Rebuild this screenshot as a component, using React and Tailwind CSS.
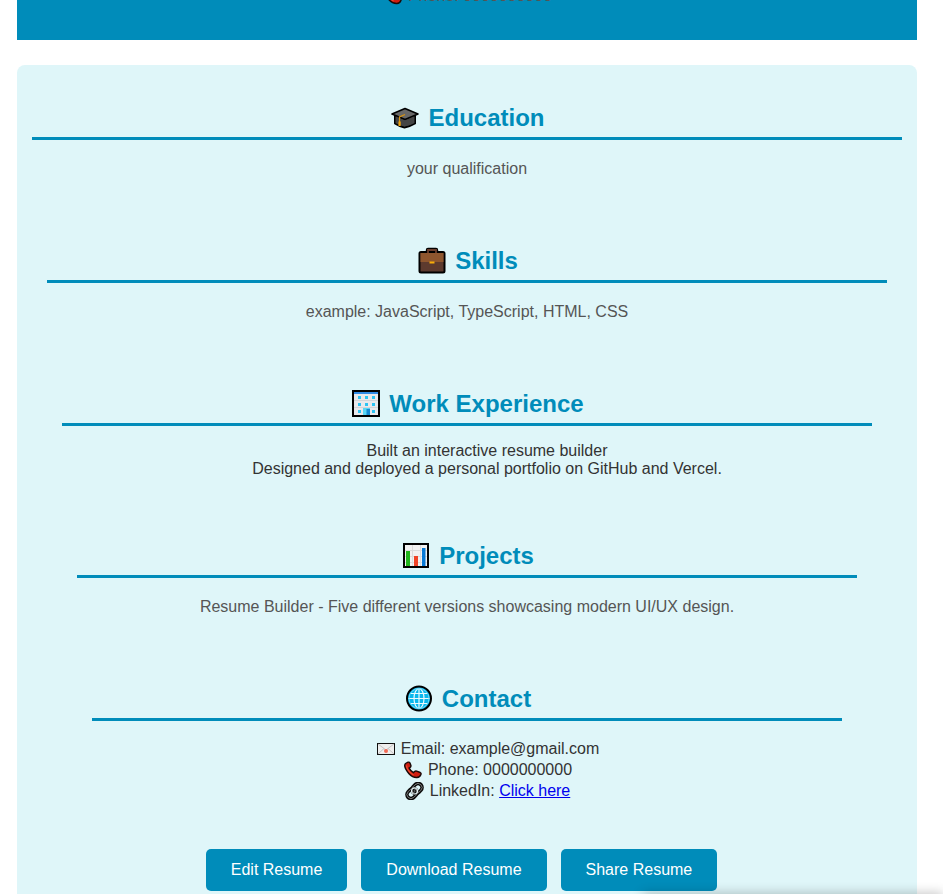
import React from "react";

const EMOJI = "inline-block shrink-0";

function GraduationCap() {
  return (
    <svg className={EMOJI} width="33" height="28" viewBox="0 0 33 28" aria-hidden="true">
      <path d="M6 10v9.500q4.500 3 9.500 4 5.500-1 10.500-4V10z" fill="#444" stroke="#000" strokeWidth="2" strokeLinejoin="round" />
      <path d="M3 10 16 4.500 29 10l-13 5.500z" fill="#686868" stroke="#000" strokeWidth="1.600" strokeLinejoin="round" />
      <path d="M6.500 12.500v6.500q4 2.500 9 3.500 5.500-1 10-3.500v-6.500L16 16.500z" fill="#444" />
      <path d="M16 10.500 10.500 13v8" fill="none" stroke="#d99411" strokeWidth="1.200" />
      <path d="M9.500 17.500h2.200V22H9.500z" fill="#f0a30a" />
    </svg>
  );
}

function Briefcase() {
  return (
    <svg className={EMOJI} width="33" height="28" viewBox="0 0 33 28" aria-hidden="true">
      <path d="M12 6V3h8v3" fill="none" stroke="#000" strokeWidth="4.400" strokeLinejoin="round" />
      <rect x="3.500" y="5" width="25" height="20.500" rx="1.500" fill="#5d3a2e" stroke="#000" strokeWidth="2" />
      <path d="M4.500 6h23v9h-23z" fill="#8e562e" />
      <path d="M12 6V3h8v3" fill="none" stroke="#6b3d2c" strokeWidth="1.800" />
      <path d="M13.500 14.500h5v2h-5z" fill="#f9ae08" />
    </svg>
  );
}

function Office() {
  return (
    <svg className={EMOJI} width="33" height="28" viewBox="0 0 33 28" aria-hidden="true">
      <rect x="3" y="1" width="26" height="25" fill="#e8e9ec" stroke="#000" strokeWidth="2" />
      <path d="M4 2h24v2H4z" fill="#2f8be6" />
      <path d="M4 10.500h24M4 17.500h24" stroke="#d3d5d9" />
      <path d="M8 6h3v3H8zM15 6h3v3h-3zM22 6h3v3h-3zM8 13h3v3H8zM15 13h3v3h-3zM22 13h3v3h-3zM8 20h3v3H8zM22 20h3v3h-3z" fill="#2cc3f3" />
      <path d="M13 18h7v7h-7z" fill="#58d6f5" />
      <path d="M16.500 19H20v6h-3.500z" fill="#168bd2" />
    </svg>
  );
}

function BarChart() {
  return (
    <svg className={EMOJI} width="33" height="28" viewBox="0 0 33 28" aria-hidden="true">
      <rect x="4" y="2" width="24" height="23" fill="#f2f2f2" stroke="#000" strokeWidth="2" />
      <path d="M5 8.500h22M5 14.500h22M5 20.500h22M12.500 3v21M20.500 3v21" stroke="#dcdcdc" />
      <path d="M6 9h4v15H6z" fill="#20b51d" />
      <path d="M14 14h4v10h-4z" fill="#f04428" />
      <path d="M22 6h3.500v18H22z" fill="#0879d5" />
    </svg>
  );
}

function Globe() {
  return (
    <svg className={EMOJI} width="33" height="28" viewBox="0 0 33 28" aria-hidden="true">
      <circle cx="16" cy="13.500" r="12" fill="#09b7ed" stroke="#000" strokeWidth="2" />
      <g fill="none" stroke="#e9faff" strokeWidth="1.200">
        <ellipse cx="16" cy="13.500" rx="5" ry="10" />
        <path d="M16 3v21M5.500 13.500h21M7 8.500h18M7 18.500h18" />
      </g>
      <circle cx="16" cy="13.500" r="10" fill="none" stroke="#6fd8f6" />
    </svg>
  );
}

function Envelope() {
  return (
    <svg className={EMOJI} width="22" height="18" viewBox="0 0 22 18" aria-hidden="true">
      <rect x="2.500" y="3.500" width="17" height="11" fill="#eeeeee" stroke="#111" />
      <path d="m3 4 8 6 8-6M3 14l6-5.500M19 14l-6-5.500" fill="none" stroke="#c4c4c4" />
      <circle cx="11" cy="11" r="2" fill="#f06a56" />
    </svg>
  );
}

function Phone() {
  return (
    <svg className={EMOJI} width="22" height="18" viewBox="0 0 22 18" aria-hidden="true">
      <path
        d="M3.500 2.500 6 1.200q1.400-.4 2 .9l.9 2.400q.3 1.300-1 2.100l-.7.500q1.300 3 4.300 4.500l1-1q1-.9 2.200-.5l3.500 1.400q1.300.7.700 2-1 2.800-3.900 3-4.300.3-8-3.800Q3.200 8.500 2.700 5q-.1-1.600.8-2.500z"
        fill="#cf1d10"
        stroke="#1a0a08"
        strokeWidth="1.400"
      />
      <path d="M4.500 4.500q.5 5.500 7 9.500" fill="none" stroke="#f04a30" strokeWidth="1.200" />
    </svg>
  );
}

function Link() {
  return (
    <svg className={EMOJI} width="22" height="18" viewBox="0 0 22 18" aria-hidden="true">
      <g transform="rotate(-45 10.500 9)" fill="none">
        <rect x="1.500" y="5" width="11" height="8" rx="4" stroke="#0c0c0c" strokeWidth="3.600" />
        <rect x="8.500" y="5" width="11" height="8" rx="4" stroke="#0c0c0c" strokeWidth="3.600" />
        <rect x="1.500" y="5" width="11" height="8" rx="4" stroke="#8f8f8f" strokeWidth="0.800" />
        <rect x="8.500" y="5" width="11" height="8" rx="4" stroke="#8f8f8f" strokeWidth="0.800" />
        <rect x="7.500" y="6" width="6" height="6" rx="3" stroke="#e4f3f5" strokeWidth="1.200" />
      </g>
    </svg>
  );
}

function Heading({ icon, children }) {
  return (
    <h2 className="flex items-center justify-center gap-[6px] border-b-3 border-[#008cba] pb-[5px] text-2xl leading-7 font-bold text-[#008cba]">
      {icon}
      {children}
    </h2>
  );
}

function Note({ children }) {
  return <p className="mt-5 mb-[69px] text-base leading-[18px] text-[#555]">{children}</p>;
}

function ActionButton({ children }) {
  return (
    <button type="button" className="h-[42px] rounded-[5px] bg-[#008cba] px-[25px] text-base leading-[18px] text-white">
      {children}
    </button>
  );
}

export default function App() {
  return (
    <div className="relative min-h-screen overflow-hidden bg-white pr-[9px] text-center font-['Liberation_Sans',Arial,sans-serif] text-base text-[#333]">
      <div className="mx-auto max-w-[900px]">
        <header className="h-10 overflow-hidden bg-[#008cba]">
          <p className="-mt-[13px] flex items-center justify-center gap-1 leading-[18px] text-[#555]">
            <Phone />
            Phone: 0000000000
          </p>
        </header>

        <main className="mt-[25px] rounded-t-[8px] bg-[#dff6f9] px-[15px] pt-[39px] pb-[3px]">
          <section>
            <Heading icon={<GraduationCap />}>Education</Heading>
            <Note>your qualification</Note>

            <section className="px-[15px]">
              <Heading icon={<Briefcase />}>Skills</Heading>
              <Note>example: JavaScript, TypeScript, HTML, CSS</Note>

              <section className="px-[15px]">
                <Heading icon={<Office />}>Work Experience</Heading>
                <ul className="mt-4 mb-16 pl-10 leading-[18px]">
                  <li>Built an interactive resume builder</li>
                  <li>Designed and deployed a personal portfolio on GitHub and Vercel.</li>
                </ul>

                <section className="px-[15px]">
                  <Heading icon={<BarChart />}>Projects</Heading>
                  <Note>Resume Builder - Five different versions showcasing modern UI/UX design.</Note>

                  <section className="px-[15px]">
                    <Heading icon={<Globe />}>Contact</Heading>
                    <ul className="mt-[17px] pl-10 leading-[21px]">
                      <li className="flex items-center justify-center gap-1">
                        <Envelope />
                        Email: example@gmail.com
                      </li>
                      <li className="flex items-center justify-center gap-1">
                        <Phone />
                        Phone: 0000000000
                      </li>
                      <li className="flex items-center justify-center gap-1">
                        <Link />
                        <span>
                          LinkedIn:{" "}
                          <a href="#linkedin" className="text-[#0000ee] underline">
                            Click here
                          </a>
                        </span>
                      </li>
                    </ul>
                  </section>
                </section>
              </section>
            </section>
          </section>

          <div className="mt-12 flex flex-wrap justify-center gap-[14px] pr-[11px]">
            <ActionButton>Edit Resume</ActionButton>
            <ActionButton>Download Resume</ActionButton>
            <ActionButton>Share Resume</ActionButton>
          </div>
        </main>
      </div>
      <div className="pointer-events-none absolute right-0 -bottom-2 h-2 w-[300px] shadow-[0_0_12px_rgba(0,0,0,0.3)]" />
    </div>
  );
}
